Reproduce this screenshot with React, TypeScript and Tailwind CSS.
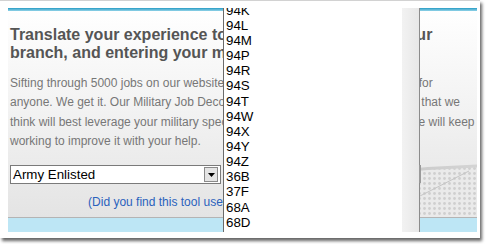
import React from 'react';

const listItems = ['94K', '94L', '94M', '94P', '94R', '94S', '94T', '94W', '94X', '94Y', '94Z', '36B', '37F', '68A', '68D', '68E'];

// decorative artwork in the bottom-right corner of the panel
function CornerArt() {
  return (
    <svg width="180" height="56" viewBox="0 0 180 56" className="absolute right-0 bottom-0">
      <defs>
        <pattern id="dots" width="5" height="5" patternUnits="userSpaceOnUse">
          <rect width="5" height="5" fill="#eaeaea" />
          <circle cx="2.5" cy="2.5" r="1.4" fill="#cfcfcf" />
        </pattern>
        <linearGradient id="arc" x1="0" x2="1" y1="0" y2="0">
          <stop offset="0" stopColor="#b9b9b9" />
          <stop offset="1" stopColor="#d4d4d4" />
        </linearGradient>
      </defs>
      <path d="M0 24 Q 90 8 180 5 L180 56 L0 56 Z" fill="url(#dots)" />
      <path d="M0 24 Q 90 8 180 5" stroke="url(#arc)" strokeWidth="3" fill="none" />
      <path d="M123 35 L172 10" stroke="#c6c6c6" strokeWidth="1" />
    </svg>
  );
}

export default function App() {
  return (
    <div className="w-[489px] h-[244px] bg-white relative overflow-hidden" style={{ fontFamily: '"Liberation Sans", Arial, sans-serif' }}>
      {/* picture frame */}
      <div className="w-[480px] h-[238px] bg-white border-t border-[#d2d2d2] shadow-[2px_3px_3px_rgba(0,0,0,0.6)] pl-[8px] pt-[7px]">
        <div className="relative w-[469px] h-[224px] flex flex-col bg-linear-to-b from-white via-[#f1f1f1] to-[#e2e2e2] overflow-hidden">
          <div className="h-[3px] bg-linear-to-b from-[#1c9cc4] to-[#8fd3e8]" />

          <h1 className="mt-[15px] pl-[2px] text-[16px] leading-[18px] font-bold text-[#555555] whitespace-nowrap">
            Translate your experience to civilian jobs by using your
            <br />
            branch, and entering your military MOS code.
          </h1>

          <p className="mt-[12px] pl-[2px] text-[12px] leading-[19.3px] text-[#777777] whitespace-nowrap">
            Sifting through 5000 jobs on our website may be a difficult and daunting task for
            <br />
            anyone. We get it. Our Military Job Decoder lists the civilian jobs and careers that we
            <br />
            think will best leverage your military specialty and skills. It's not perfect, but we will keep
            <br />
            working to improve it with your help.
          </p>

          <div className="relative flex-1">
            <CornerArt />
            <div className="relative mt-[14px] ml-[2px] w-[211px] h-[19px] bg-white border border-[#7a7a7a] flex items-center">
              <span className="pl-[2px] text-[13.33px] text-black flex-1">Army Enlisted</span>
              <div className="w-[14px] h-[15px] mr-[2px] bg-[#e4e4e4] border border-[#8a8a8a] flex items-center justify-center">
                <svg width="7" height="4" viewBox="0 0 7 4">
                  <path d="M0 0 L7 0 L3.5 4 Z" fill="#000" />
                </svg>
              </div>
            </div>
            <p className="relative mt-[11px] text-center text-[12px] leading-[14px] text-[#2a62bd] whitespace-nowrap">
              (Did you find this tool useful? Let us know what you think.)
            </p>
          </div>

          <div className="h-[1px] bg-[#b4b4b4]" />
          <div className="h-[14px] bg-[#bde6f5]" />

          {/* open dropdown list */}
          <div className="absolute left-[215px] top-0 w-[197px] h-[224px] flex">
            <div className="w-[179px] h-full bg-white border-l border-[#6b6b6b] overflow-hidden">
              <ul className="-mt-[5.4px] pl-[2px] text-[13.33px] leading-[15.15px] text-black">
                {listItems.map((code) => (
                  <li key={code}>{code}</li>
                ))}
              </ul>
            </div>
            <div className="w-[17px] h-full bg-linear-to-r from-[#f2f2f2] to-[#e8e8e8]" />
            <div className="w-[1px] h-full bg-[#8c8c8c] flex flex-col">
              <div className="h-[157px]" />
              <div className="h-[18px] w-[2px] bg-[#9a9a9a]" />
            </div>
          </div>
        </div>
      </div>
    </div>
  );
}
